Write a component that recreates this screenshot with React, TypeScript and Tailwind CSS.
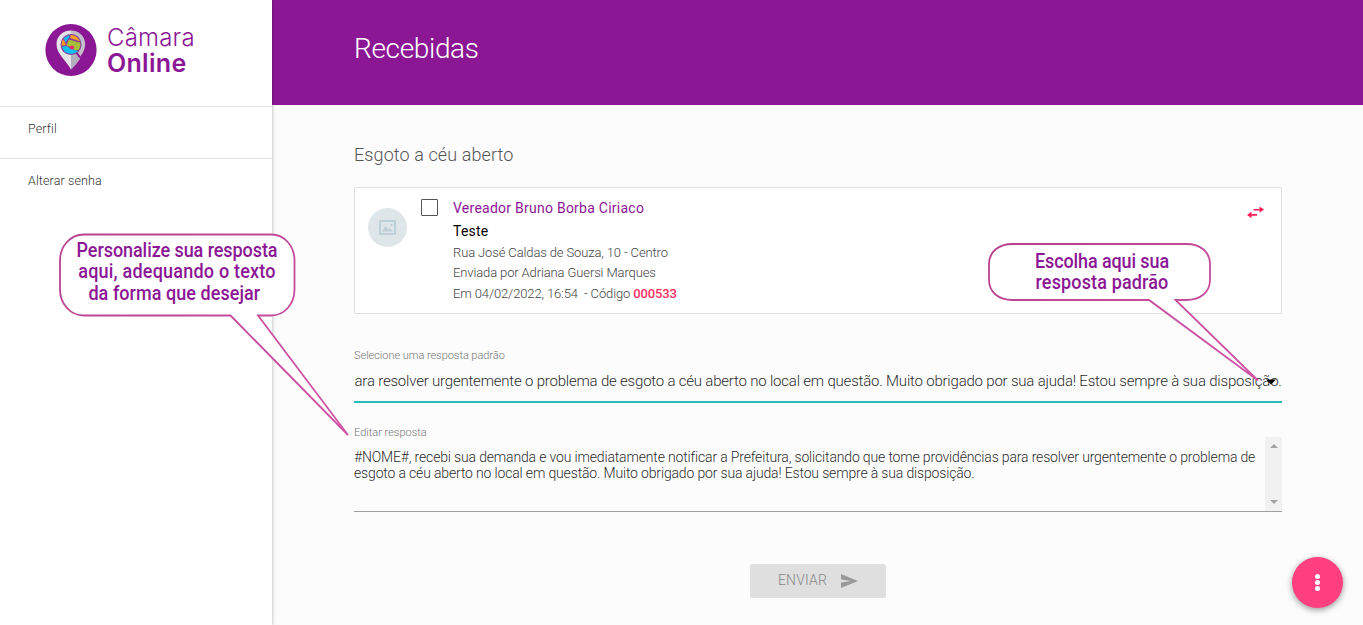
import { ReactNode } from "react";

function LogoMark() {
  return (
    <svg width="52" height="54" viewBox="0 0 52 54" className="block">
      <ellipse cx="26" cy="27" rx="25.6" ry="26" fill="#8c1795" />
      <path d="M26 7.500C17.500 7.500 11.500 13.500 11.500 21c0 10.500 10 16.500 14.500 25.500V7.500z" fill="#e4e4e8" />
      <path d="M26 7.500c8 0 14.200 6 14.200 13.500 0 10.500-9.700 16.500-14.200 25.500V7.500z" fill="#c3bfc9" />
      <path d="M26 31l7-1 2 6-4.500 6-4.500 4.500z" fill="#b3aebb" />
      <path d="M31.500 29.500l3.500 5" stroke="#8c1795" strokeWidth="2" />
      <circle cx="26" cy="21.500" r="10.500" fill="#8c3a9c" />
      <clipPath id="globe">
        <circle cx="26" cy="21.500" r="9.400" />
      </clipPath>
      <g clipPath="url(#globe)">
        <path d="M15 10h22v14H15z" fill="#8c3a9c" />
        <path d="M15 16.500l3.500 0 2.500 5.500-6 1z" fill="#f79a1f" />
        <path d="M18 14l6-4 0.500 4-4 5.500z" fill="#12b8e8" />
        <path d="M26 11h8l4 8-4-1-9-3z" fill="#f9a11b" />
        <path d="M24 16.500l9 2.700 4 0.300-1 8-6.500-.5-8-5z" fill="#a4bf38" />
        <path d="M15 24l6.500-1 4 2.500 9 3-3 5H17z" fill="#0bc0f0" />
        <circle cx="27" cy="24.500" r="2.100" fill="#ee2a6a" />
      </g>
    </svg>
  );
}

function Sidebar() {
  return (
    <aside className="relative z-10 flex w-[272px] shrink-0 flex-col bg-white shadow-[1px_0_3px_rgba(0,0,0,0.2)]">
      <div className="flex h-[106px] items-start pt-[23px] pl-[45px]">
        <LogoMark />
        <div className="ml-[10px] pt-[2px] text-[#8c1795] font-['Inter',sans-serif]">
          <div className="text-[24px] leading-[25px] tracking-[0.200px] font-light">Câmara</div>
          <div className="text-[25px] leading-[26px] tracking-[0.300px] font-semibold">Online</div>
        </div>
      </div>
      <nav className="text-[12.500px] font-light tracking-[0.120px] text-black/85">
        <div className="flex h-[52px] items-center border-t border-[#e2e2e2] pb-[7px] pl-7">Perfil</div>
        <div className="flex h-[52px] items-center border-t border-[#e2e2e2] pb-[7px] pl-7">Alterar senha</div>
      </nav>
    </aside>
  );
}

function RequestCard() {
  return (
    <section className="mt-[20px] flex h-[127px] rounded-[1px] border border-[#e0e0e0] bg-white">
      <div className="mt-[20px] ml-[13px] flex size-[39px] items-center justify-center rounded-full bg-[#dee6ea]">
        <svg width="17" height="15" viewBox="0 0 17 15">
          <path d="M0 0h17v15H0zM2 2v11h13V2z" fill="#bfcfd7" fillRule="evenodd" />
          <path d="M3 11.500l3.300-5.500 3 3.500 1.500-1.500 3 3.500zM11.500 4h2v2h-2z" fill="#bfcfd7" />
        </svg>
      </div>
      <div className="mt-[11px] ml-[14px] size-[17px] rounded-[1px] border border-[#555]" />
      <div className="ml-[15px] pt-[10px] text-[13px] font-light tracking-[-0.125px] text-[#444]">
        <div className="h-[22px] text-[14px] leading-[21px] font-normal tracking-[0.250px] text-[#8c1795]">
          Vereador Bruno Borba Ciriaco
        </div>
        <div className="h-[22px] text-[14px] leading-[22px] font-normal tracking-[0.200px] text-black">Teste</div>
        <div className="h-[20px] leading-[22px]">Rua José Caldas de Souza, 10 - Centro</div>
        <div className="h-[21px] leading-[22px]">Enviada por Adriana Guersi Marques</div>
        <div className="h-[20px] leading-[22px] whitespace-pre">
          Em 04/02/2022, 16:54  - Código <span className="font-medium text-[#ff2d62]">000533</span>
        </div>
      </div>
      <svg className="mt-[18px] mr-[17px] ml-auto" width="17" height="13" viewBox="0 0 17 13">
        <path d="M6.500 2.900h6V0.500L17 3.600l-4.500 3.200V4.500h-6zM10 8H4.500V5.800L0 9l4.500 3.300V9.700H10z" fill="#ff1e56" />
      </svg>
    </section>
  );
}

function Fields() {
  return (
    <>
      <div className="mt-[33px] h-4 text-[11px] leading-[17px] font-light text-[#777] tracking-[-0.040px]">
        Selecione uma resposta padrão
      </div>
      <div className="relative flex h-[40px] items-center border-b-2 border-[#26bdb8] text-[15px] font-light tracking-[-0.202px] whitespace-nowrap text-black/87">
        <span className="pb-px pl-[0.500px]">
          ara resolver urgentemente o problema de esgoto a céu aberto no local em questão. Muito obrigado por sua
          ajuda! Estou sempre à sua disposição.
        </span>
        <svg className="absolute top-[16px] right-[6px]" width="10" height="6" viewBox="0 0 10 6">
          <path d="M0 0.500h10L5 5.500z" fill="#000" />
        </svg>
      </div>
      <div className="mt-[21px] h-4 text-[11px] leading-[17px] font-light text-[#777]">Editar resposta</div>
      <div className="mt-[-3px] flex h-[75px] border-b border-[#9e9e9e]">
        <p className="w-[911px] pt-[12px] text-[14px] leading-[16px] font-light tracking-[-0.160px] whitespace-nowrap text-black/87">
          #NOME#, recebi sua demanda e vou imediatamente notificar a Prefeitura, solicitando que tome providências
          para resolver urgentemente o problema de
          <br />
          esgoto a céu aberto no local em questão. Muito obrigado por sua ajuda! Estou sempre à sua disposição.
        </p>
        <div className="flex w-[17px] shrink-0 flex-col items-center justify-between bg-[#f1f1f1] py-[7px]">
          <svg width="8" height="4" viewBox="0 0 8 4">
            <path d="M0 4h8L4 0z" fill="#a3a3a3" />
          </svg>
          <svg width="8" height="4" viewBox="0 0 8 4">
            <path d="M0 0h8L4 4z" fill="#a3a3a3" />
          </svg>
        </div>
      </div>
      <button className="ml-[396px] mt-[52px] flex h-[34px] w-[136px] items-center rounded-[2px] bg-[#dfdfdf] pb-px pl-7 text-[14px] font-light tracking-[0.150px] text-[#888]">
        ENVIAR
        <svg className="ml-[14px]" width="17" height="14" viewBox="0 0 17 14">
          <path d="M0 0l17 7-17 7V8.500L10 7 0 5.500z" fill="#999" />
        </svg>
      </button>
    </>
  );
}

function CalloutText({ className, children }: { className: string; children: ReactNode }) {
  return (
    <div
      className={`absolute flex scale-x-90 flex-col items-center text-[20px] leading-[21.500px] font-medium whitespace-nowrap text-[#8c1795] ${className}`}
    >
      {children}
    </div>
  );
}

function Callouts() {
  return (
    <div className="pointer-events-none absolute inset-0 z-20">
      <svg className="absolute inset-0" width="1363" height="625" viewBox="0 0 1363 625" strokeWidth="1.800">
        <defs>
          <linearGradient id="edge" x1="0" y1="0" x2="1" y2="1">
            <stop offset="0" stopColor="#b8408f" />
            <stop offset="1" stopColor="#d255a8" />
          </linearGradient>
        </defs>
        <path
          d="M84 234.500H271c14 0 23.500 12 23.500 26v29c0 14-9.500 26-23.500 26h-13L348 435 230.500 315.500H84c-14 0-24-12-24-26v-29c0-14 10-26 24-26z"
          fill="#fefefe"
          stroke="url(#edge)"
        />
        <path
          d="M1012.500 244h174c14 0 23.500 8 23.500 20v16c0 12-9.500 20-23.500 20h-11L1258 380.500 1149 300h-136.500c-14 0-23.500-8-23.500-20v-16c0-12 9.500-20 23.500-20z"
          fill="#fefefe"
          stroke="url(#edge)"
        />
      </svg>
      <CalloutText className="top-[240px] left-[62px] w-[230px]">
        <span className="tracking-[-0.080px]">Personalize sua resposta</span>
        <span className="-mt-px mb-px tracking-[0.240px]">aqui, adequando o texto</span>
        <span className="mr-[6px] tracking-[0.060px]">da forma que desejar</span>
      </CalloutText>
      <CalloutText className="top-[251px] left-[992px] w-[220px]">
        <span className="tracking-[-0.120px]">Escolha aqui sua</span>
        <span className="-mt-px tracking-[0.160px]">resposta padrão</span>
      </CalloutText>
    </div>
  );
}

export default function App() {
  return (
    <div className="relative flex h-[625px] w-[1363px] overflow-hidden bg-[#fcfcfc] font-['Roboto',sans-serif]">
      <Sidebar />
      <main className="flex grow flex-col">
        <header className="flex h-[105px] items-center bg-[#8c1795] pb-[7px] pl-[82px] text-[28px] font-light tracking-[-0.350px] text-white">
          Recebidas
        </header>
        <div className="ml-[82px] w-[928px] pt-[38px]">
          <h2 className="h-6 text-[18px] leading-6 font-light tracking-[0.100px] text-[#555]">Esgoto a céu aberto</h2>
          <RequestCard />
          <Fields />
        </div>
      </main>
      <button className="absolute right-[20px] bottom-[17px] z-10 flex size-[51px] flex-col items-center justify-center gap-[1px] rounded-full bg-[#ff3f7f] shadow-[0_2px_6px_rgba(0,0,0,0.4)]">
        <i className="size-[5px] rounded-full bg-white" />
        <i className="size-[5px] rounded-full bg-white" />
        <i className="size-[5px] rounded-full bg-white" />
      </button>
      <Callouts />
    </div>
  );
}
